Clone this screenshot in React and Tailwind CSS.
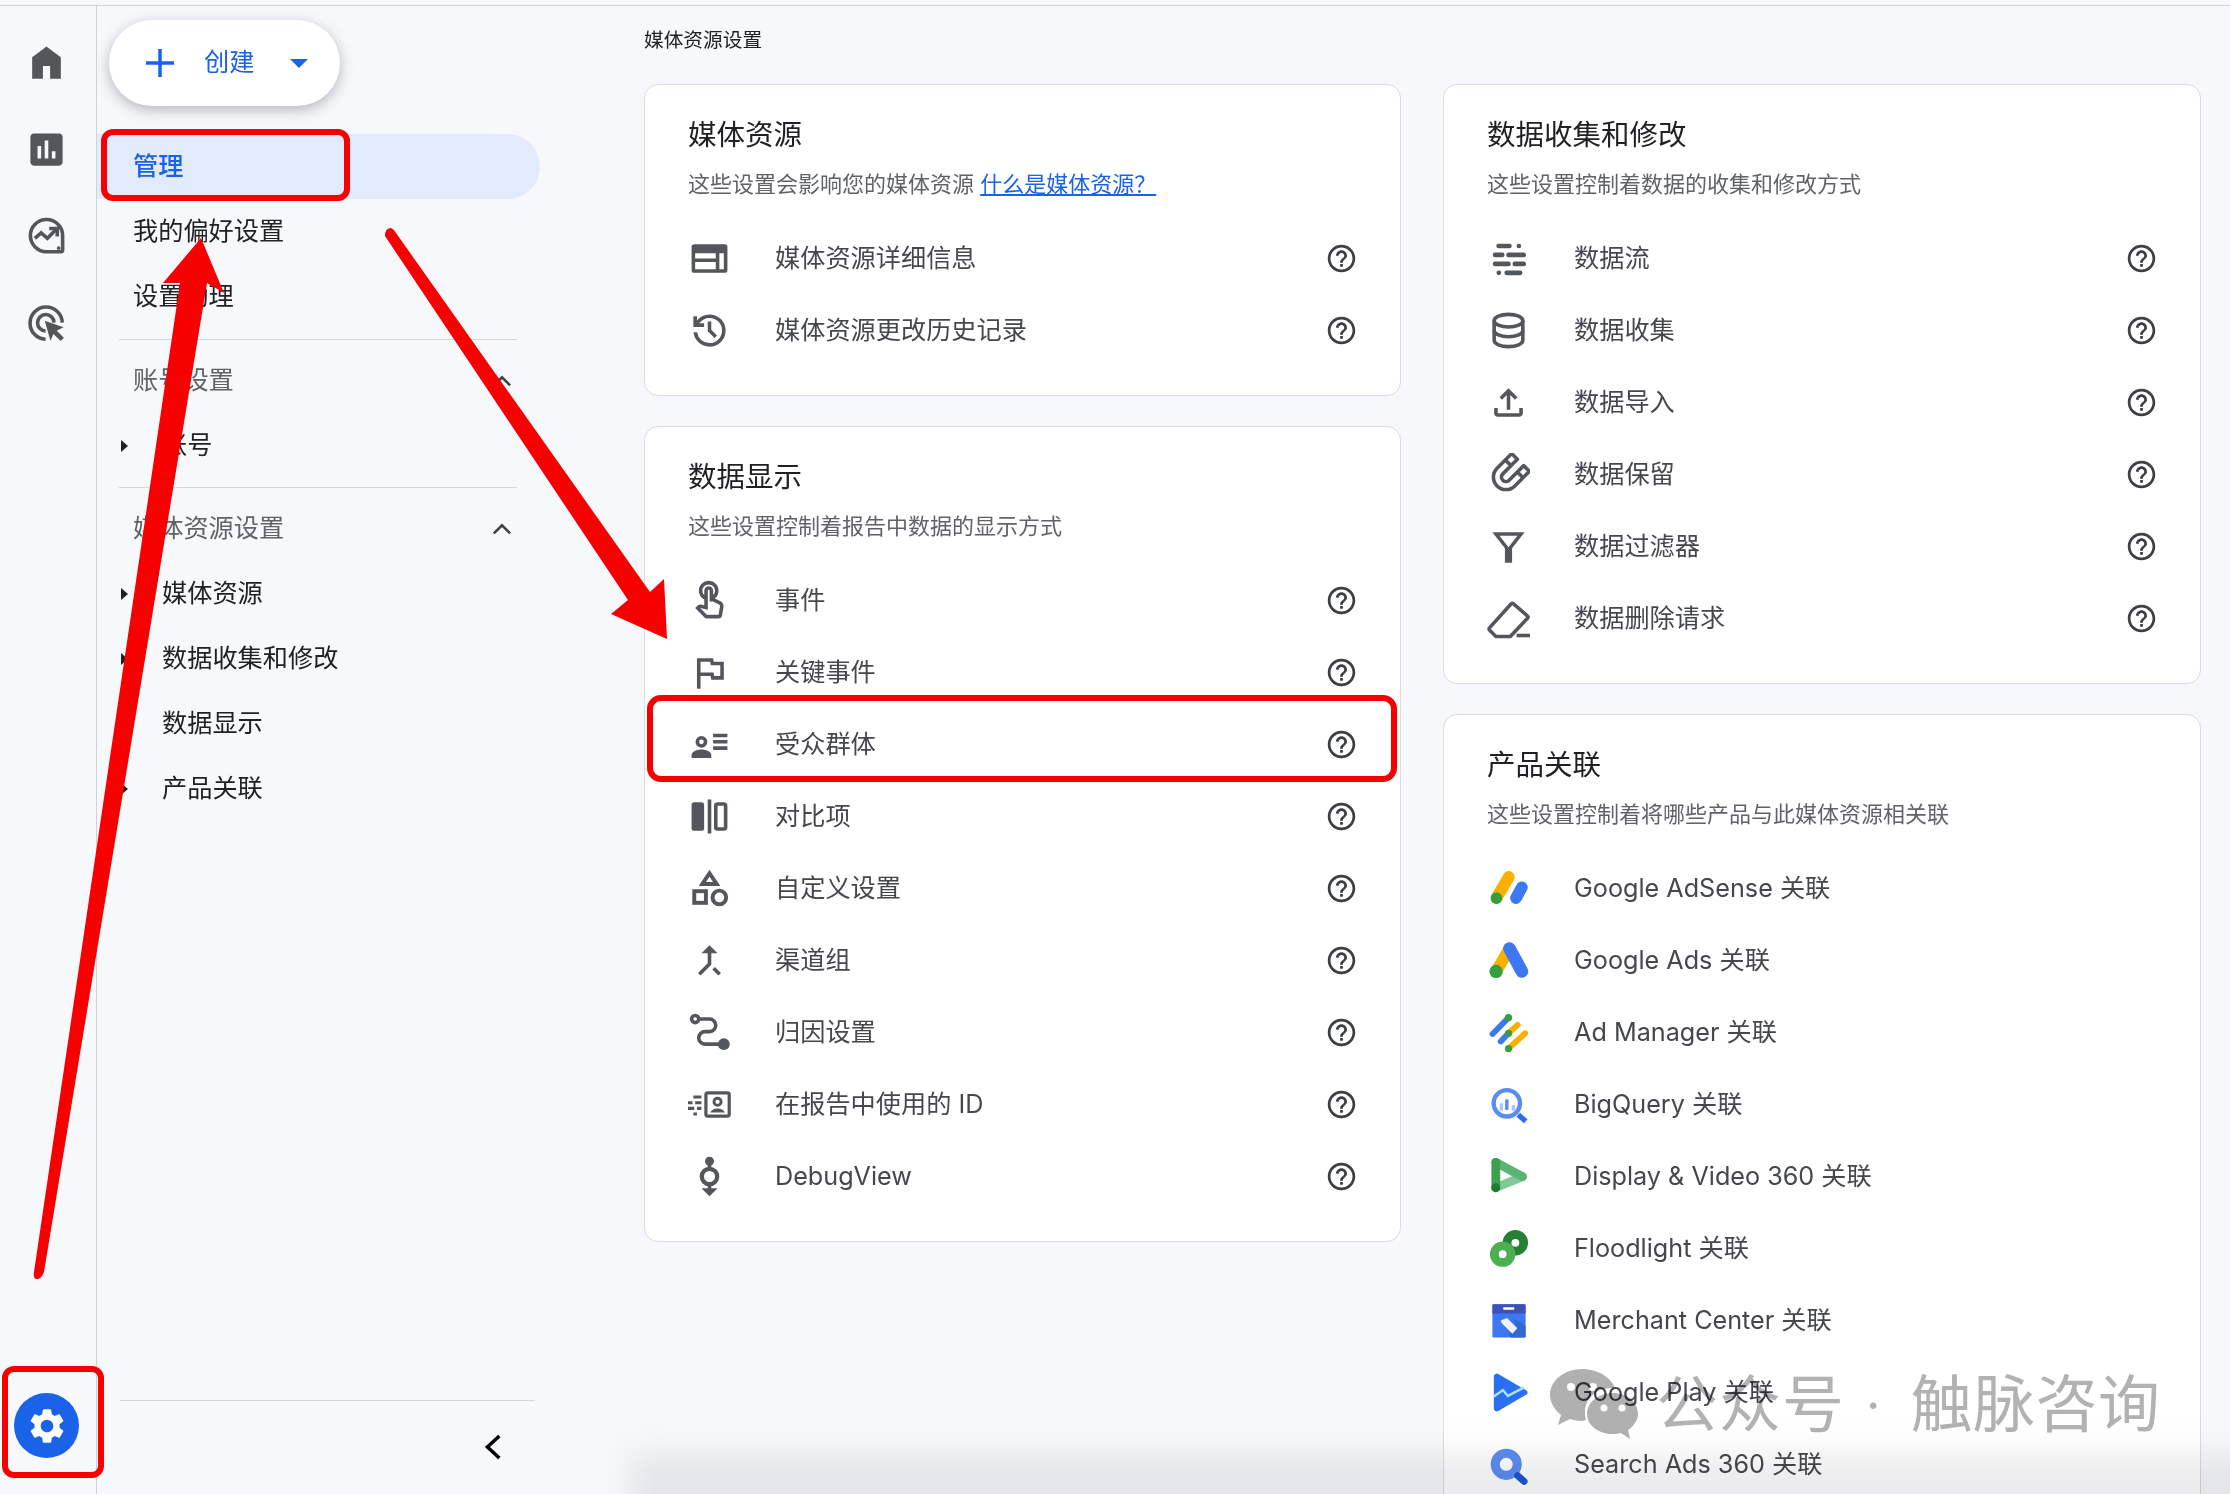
import { MdOutlineTouchApp, MdHelpOutline, MdCallMerge } from "react-icons/md";

const Svg = ({ children, size = 43, vb = "0 0 24 24" }) => (
  <svg width={size} height={size} viewBox={vb} fill="currentColor">
    {children}
  </svg>
);

const HomeIcon = () => <Svg><path d="M4 21V9l8-6 8 6v12h-6v-7h-4v7z" /></Svg>;
const ReportsIcon = () => (
  <Svg><path d="M19 3H5c-1.1 0-2 .9-2 2v14c0 1.1.9 2 2 2h14c1.1 0 2-.9 2-2V5c0-1.1-.9-2-2-2zM9 17H7v-7h2v7zm4 0h-2V7h2v10zm4 0h-2v-4h2v4z" /></Svg>
);
const ExploreIcon = () => (
  <Svg>
    <g fill="none" stroke="currentColor" strokeWidth="2">
      <path d="M20 20.500h-8a9 9 0 1 1 9-9v8a1 1 0 0 1-1 1z" />
      <path d="M5.500 13l3.500-3 3.500 3 5-5" />
      <path d="M13.500 7.500h4.500v4.500" />
    </g>
    <circle cx="18.800" cy="18.500" r="1" />
  </Svg>
);
const AdvertisingIcon = () => (
  <Svg>
    <g fill="none" stroke="currentColor" strokeWidth="2">
      <path d="M20.800 11.500a9 9 0 1 0-9.300 9.300" />
      <path d="M16.200 11.500a4.600 4.600 0 1 0-4.700 4.700" />
    </g>
    <path d="M11 10.500l10.500 3.600-3.800 1.900 4 4-1.800 1.800-4-4-1.700 3.800z" />
  </Svg>
);
const GearIcon = () => (
  <Svg size={42}>
    <path d="M19.140 12.940c.04-.3.06-.61.06-.94 0-.32-.02-.64-.07-.94l2.030-1.580c.18-.14.23-.41.12-.61l-1.920-3.320c-.12-.22-.37-.29-.59-.22l-2.390.96c-.5-.38-1.030-.7-1.620-.94l-.36-2.540c-.04-.24-.24-.41-.48-.41h-3.840c-.24 0-.43.17-.47.41l-.36 2.540c-.59.24-1.130.57-1.620.94l-2.390-.96c-.22-.08-.47 0-.59.22L2.740 8.870c-.12.21-.08.47.12.61l2.030 1.580c-.05.3-.09.63-.09.94s.02.64.07.94l-2.030 1.580c-.18.14-.23.41-.12.61l1.920 3.320c.12.22.37.29.59.22l2.390-.96c.5.38 1.030.7 1.620.94l.36 2.540c.05.24.24.41.48.41h3.840c.24 0 .44-.17.47-.41l.36-2.540c.59-.24 1.130-.56 1.620-.94l2.390.96c.22.08.47 0 .59-.22l1.920-3.320c.12-.22.07-.47-.12-.61l-2.010-1.580zM12 15.600c-1.980 0-3.600-1.620-3.600-3.600s1.620-3.600 3.600-3.600 3.600 1.620 3.600 3.600-1.620 3.600-3.600 3.600z" />
  </Svg>
);

const DetailsIcon = () => (
  <Svg>
    <path fillRule="evenodd" d="M3.500 4h17A1.500 1.500 0 0 1 22 5.500v13a1.500 1.500 0 0 1-1.500 1.500h-17A1.500 1.500 0 0 1 2 18.500v-13A1.500 1.500 0 0 1 3.500 4zM4 9v3h11.500V9zm0 5v4h11.500v-4zm13.500-5v9H20V9z" />
  </Svg>
);
const HistoryIcon = () => (
  <Svg>
    <path d="M12 21q-3.450 0-6.010-2.290Q3.430 16.430 3.050 13H5.100q.35 2.600 2.310 4.300Q9.380 19 12 19q2.920 0 4.960-2.040T19 12q0-2.930-2.040-4.960T12 5q-1.720 0-3.220.8T6.250 8H9v2H3V4h2v2.350q1.280-1.600 3.120-2.470Q9.970 3 12 3q3.750 0 6.380 2.630T21 12q0 3.750-2.620 6.380T12 21zm2.800-4.800L11 12.400V7h2v4.600l3.200 3.200z" />
  </Svg>
);
const TouchIcon = () => <MdOutlineTouchApp size={43} />;
const FlagIcon = () => (
  <Svg><path d="M12.360 6l.4 2H18v6h-3.360l-.4-2H7V6h5.360M14 4H5v17h2v-7h5.600l.4 2h7V6h-5.600L14 4z" /></Svg>
);
const AudienceIcon = () => (
  <Svg>
    <circle cx="7.500" cy="10.500" r="2.300" fill="none" stroke="currentColor" strokeWidth="2" />
    <path d="M2 19.500v-1.500c0-2 3-3.200 5.500-3.200s5.500 1.200 5.500 3.200v1.500z" />
    <path d="M14 6h8v2h-8zM14 9.500h8v2h-8zM14 13h8v2h-8z" />
  </Svg>
);
const CompareIcon = () => (
  <Svg>
    <rect x="2" y="4" width="7" height="16" rx="1.500" />
    <rect x="11" y="2.500" width="2" height="19" />
    <rect x="15.500" y="5" width="5.500" height="14" rx="1" fill="none" stroke="currentColor" strokeWidth="2" />
  </Svg>
);
const ShapesIcon = () => (
  <Svg>
    <g fill="none" stroke="currentColor" strokeWidth="2.200">
      <path d="M12 3.500l4 6H8z" />
      <rect x="3.500" y="13.500" width="6.500" height="6.500" />
      <circle cx="17.500" cy="17" r="3.800" />
    </g>
  </Svg>
);
const MergeIcon = () => <MdCallMerge size={43} />;
const RouteIcon = () => (
  <Svg>
    <g fill="none" stroke="currentColor" strokeWidth="2">
      <circle cx="4" cy="4.500" r="2" />
      <path d="M6 4.500h6a3.500 3.500 0 0 1 0 7H9.500a3.500 3.500 0 0 0 0 7H18" />
    </g>
    <circle cx="20" cy="18.500" r="3.300" />
  </Svg>
);
const IdIcon = () => (
  <Svg>
    <path d="M3 7h4.500v1.700H3zM0 10.200h2.500v1.700H0zM4 10.200h3.500v1.700H4zM0 13.300h3.500v1.700H0zM5 13.300h2.500v1.700H5zM3 16.500h2v1.700H3z" />
    <rect x="10" y="5.500" width="13" height="13" rx="1" fill="none" stroke="currentColor" strokeWidth="1.800" />
    <circle cx="16.500" cy="10.500" r="2" fill="none" stroke="currentColor" strokeWidth="1.600" />
    <path d="M12.500 16.500c.5-1.500 2.500-2.200 4-2.200s3.500.7 4 2.200z" />
  </Svg>
);
const DebugIcon = () => (
  <Svg>
    <circle cx="12" cy="3.500" r="2.500" />
    <path d="M11 3h2v17h-2z" />
    <circle cx="12" cy="12" r="4.300" fill="#fff" stroke="currentColor" strokeWidth="2.400" />
    <path d="M7.500 18.500h9L12 23z" />
  </Svg>
);
const StreamIcon = () => (
  <Svg>
    <g fill="none" stroke="currentColor" strokeWidth="2.600" strokeLinecap="round">
      <path d="M6.500 5h6M17.800 5h.01M4.500 10h4M12 10h8.500M4.500 15h7.500M15.500 15h5M6.600 20h.01M11 20h7.500" />
    </g>
  </Svg>
);
const DatabaseIcon = () => (
  <Svg>
    <g fill="none" stroke="currentColor" strokeWidth="2">
      <ellipse cx="12" cy="6.500" rx="8" ry="3.500" />
      <path d="M4 6.500v11c0 1.900 3.600 3.500 8 3.500s8-1.600 8-3.500v-11" />
      <path d="M4 12c0 1.900 3.600 3.500 8 3.500s8-1.600 8-3.500" />
    </g>
  </Svg>
);
const UploadIcon = () => (
  <Svg>
    <path d="M18 15v3H6v-3H4v3c0 1.100.9 2 2 2h12c1.100 0 2-.9 2-2v-3h-2zM7 9l1.410 1.410L11 7.830V16h2V7.830l2.590 2.580L17 9l-5-5-5 5z" />
  </Svg>
);
const MagnetIcon = () => (
  <Svg>
    <g transform="rotate(45 12 12)" fill="none" stroke="currentColor" strokeWidth="2" strokeLinejoin="round">
      <path d="M5 2.500h4.500V14a2.500 2.500 0 0 0 5 0V2.500H19V14a7 7 0 0 1-14 0z" />
      <path d="M5 7.500h4.500M14.500 7.500H19" />
    </g>
  </Svg>
);
const FunnelIcon = () => (
  <Svg>
    <path fillRule="evenodd" d="M3 4h18l-7 9v8h-4v-8zm4 2l5 6.400L17 6z" />
  </Svg>
);
const EraserIcon = () => (
  <Svg>
    <path d="M14.800 3.800l7.700 6.700a1 1 0 0 1 .1 1.400L13 22H5l-3.500-3.500a1 1 0 0 1 0-1.400L13.400 3.900a1 1 0 0 1 1.400-.1z" fill="none" stroke="currentColor" strokeWidth="2" strokeLinejoin="round" />
    <path d="M16.500 20.500H24v2h-7.500z" />
  </Svg>
);

const Logo = ({ children }) => <svg width="44" height="44" viewBox="0 0 44 44">{children}</svg>;

const AdSenseLogo = () => (
  <Logo>
    <path d="M9.700 32.300L22.300 10.700" stroke="#fbb000" strokeWidth="12" strokeLinecap="round" />
    <circle cx="9.700" cy="32.300" r="6" fill="#389e3c" />
    <path d="M29.700 32.300l6-11" stroke="#3b78f2" strokeWidth="12" strokeLinecap="round" />
  </Logo>
);
const AdsLogo = () => (
  <Logo>
    <path d="M23 10.300L9.300 33.700" stroke="#fbb000" strokeWidth="12" strokeLinecap="round" />
    <path d="M23 10.300l12.700 23.400" stroke="#3b78f2" strokeWidth="13" strokeLinecap="round" />
    <circle cx="9.300" cy="33.700" r="6.800" fill="#389e3c" />
  </Logo>
);
const AdManagerLogo = () => (
  <Logo>
    <g strokeWidth="6" strokeLinecap="round">
      <path d="M5.700 24L22 7.300" stroke="#3b78f2" />
      <path d="M14 31.700l8-8.400" stroke="#3b78f2" />
      <path d="M22 23.300l9.300-8.600" stroke="#fbb000" />
      <path d="M22 39l17-15.700" stroke="#fbb000" />
    </g>
    <circle cx="22" cy="7.300" r="3.700" fill="#389e3c" />
    <circle cx="22" cy="23.300" r="3.700" fill="#389e3c" />
    <circle cx="22" cy="39" r="3.700" fill="#389e3c" />
  </Logo>
);
const BigQueryLogo = () => (
  <Logo>
    <circle cx="20.300" cy="21.300" r="13.500" fill="#fff" stroke="#5b8def" strokeWidth="4.500" />
    <path d="M32 33l7.700 6.700" stroke="#2b6cf0" strokeWidth="5.500" />
    <path d="M14.700 21.300v7.400M27 23v5.700" stroke="#a8c7fa" strokeWidth="3.500" />
    <path d="M20.300 17.300V28" stroke="#5b8def" strokeWidth="3.500" />
  </Logo>
);
const DisplayLogo = () => (
  <Logo>
    <g fill="none" strokeWidth="9" strokeLinecap="round">
      <path d="M9 34L36.300 22.700" stroke="#81c995" />
      <path d="M9 8L36.300 22.700" stroke="#5bb374" />
      <path d="M9 8v26" stroke="#3ba14f" />
    </g>
    <circle cx="9" cy="34" r="4.500" fill="#1e7e34" />
  </Logo>
);
const FloodlightLogo = () => (
  <Logo>
    <circle cx="29" cy="16.700" r="8.500" fill="none" stroke="#268035" strokeWidth="9" />
    <circle cx="16" cy="28.300" r="8.500" fill="none" stroke="#4caf50" strokeWidth="9" />
  </Logo>
);
const MerchantLogo = () => (
  <Logo>
    <rect x="5.500" y="6" width="34" height="34" rx="1.500" fill="#3b78f2" />
    <path d="M22 36l9-6-5-10 13.500 8v10.500a1.500 1.500 0 0 1-1.500 1.500H24z" fill="#3367d6" />
    <path d="M5.500 7.500A1.500 1.500 0 0 1 7 6h31a1.500 1.500 0 0 1 1.500 1.500v7.800h-34z" fill="#3f51b5" />
    <rect x="16.500" y="9" width="11.500" height="2.500" rx="1" fill="#fff" />
    <path d="M14 22.500l6.500-2.500 10.500 10.500-5 5.500L15 25z" fill="#f1f3f4" />
  </Logo>
);
const PlayLogo = () => (
  <Logo>
    <path d="M7 6a3 3 0 0 1 4.500-2.500l29 17a2.500 2.500 0 0 1 0 4l-29 17A3 3 0 0 1 7 39z" fill="#2a6ff0" />
    <path d="M7 26.700l9.300-6.700 5 6L38 17.300" fill="none" stroke="#a8e6ff" strokeWidth="2.500" />
  </Logo>
);
const SearchAdsLogo = () => (
  <Logo>
    <circle cx="19.700" cy="22.300" r="11.300" fill="none" stroke="#5b8def" strokeWidth="9.300" />
    <path d="M31.300 34l6.700 5.700" stroke="#1a56d6" strokeWidth="7" strokeLinecap="round" />
  </Logo>
);

const railIcons = [HomeIcon, ReportsIcon, ExploreIcon, AdvertisingIcon];

const leftTop = [
  ["媒体资源详细信息", DetailsIcon],
  ["媒体资源更改历史记录", HistoryIcon],
];
const displayRows = [
  ["事件", TouchIcon],
  ["关键事件", FlagIcon],
  ["受众群体", AudienceIcon],
  ["对比项", CompareIcon],
  ["自定义设置", ShapesIcon],
  ["渠道组", MergeIcon],
  ["归因设置", RouteIcon],
  ["在报告中使用的 ID", IdIcon],
  ["DebugView", DebugIcon],
];
const collectRows = [
  ["数据流", StreamIcon],
  ["数据收集", DatabaseIcon],
  ["数据导入", UploadIcon],
  ["数据保留", MagnetIcon],
  ["数据过滤器", FunnelIcon],
  ["数据删除请求", EraserIcon],
];
const linkRows = [
  ["Google AdSense 关联", AdSenseLogo],
  ["Google Ads 关联", AdsLogo],
  ["Ad Manager 关联", AdManagerLogo],
  ["BigQuery 关联", BigQueryLogo],
  ["Display & Video 360 关联", DisplayLogo],
  ["Floodlight 关联", FloodlightLogo],
  ["Merchant Center 关联", MerchantLogo],
  ["Google Play 关联", PlayLogo],
  ["Search Ads 360 关联", SearchAdsLogo],
];

const Row = ({ label, Icon, help = true }) => (
  <div className="flex h-[72px] items-center">
    <div className="flex w-[43px] items-center justify-center text-[#53575c]">
      <Icon />
    </div>
    <span className="ml-[44px] flex-1 pt-[1px] text-[25.200px] text-[#44474c]">{label}</span>
    {help && (
      <span className="flex w-[43px] justify-center text-[#3c4043]">
        <MdHelpOutline size={33} />
      </span>
    )}
  </div>
);

const Card = ({ title, desc, rows, help = true }) => (
  <section className="rounded-[14px] border border-[#dadce0] bg-white pt-[32px] pr-[37px] pb-[29px] pl-[43px]">
    <h2 className="h-[36px] text-[28.500px] leading-[36px] font-normal text-[#202124]">{title}</h2>
    <p className="mt-[16px] mb-[23px] h-[30px] text-[22px] leading-[30px] text-[#5f6368]">{desc}</p>
    {rows.map(([label, Icon]) => (
      <Row key={label} label={label} Icon={Icon} help={help} />
    ))}
  </section>
);

const NavChild = ({ label }) => (
  <div className="relative flex h-[65px] items-center pl-[65px] text-[25.200px] text-[#202124]">
    <span className="absolute left-[24px] h-0 w-0 border-y-[6px] border-l-[7px] border-y-transparent border-l-[#202124]" />
    {label}
  </div>
);

const Chevron = () => (
  <svg width="30" height="30" viewBox="0 0 24 24" fill="none" stroke="#3c4043" strokeWidth="2">
    <path d="M5.500 15.500L12 9l6.500 6.500" />
  </svg>
);

const Annotations = () => (
  <svg className="pointer-events-none absolute top-0 left-0" width="2230" height="1494" fill="#f60000">
    <g fill="none" stroke="#f60000" strokeWidth="6">
      <rect x="104" y="132" width="243" height="66" rx="9" />
      <rect x="5" y="1369" width="96" height="106" rx="9" />
      <rect x="650" y="698" width="744" height="81" rx="11" />
    </g>
    <path d="M201 238L224 293 207 283 44 1272Q41 1280 36 1279 33 1278 34 1272L180 283 163 283z" />
    <path d="M385 236Q385 228 391 228 394 229 396 233L650 592 664 579 667 639 611 614 628 600z" />
  </svg>
);

const Watermark = () => (
  <div className="pointer-events-none absolute top-[1368px] left-[1550px] flex items-center text-[#b2b2b2] mix-blend-multiply">
    <svg width="88" height="70" viewBox="0 0 88 70">
      <path d="M32 0C14 0 0 12 0 26c0 8 5 15 11 20l-3 10 12-6c4 1 8 2 12 2l4-1c-1-3-1-6-1-8 0-14 12-24 27-24 1 0 2 0 3 .3C62 9 48 0 32 0z" fill="#b0b0b0" />
      <path d="M63 24C49 24 37 33 37 45s12 20 26 20c3 0 6-.5 8-1l9 6-2-9c6-4 10-10 10-16 0-12-11-21-25-21z" fill="#b0b0b0" />
      <circle cx="21" cy="18" r="4" fill="#fff" />
      <circle cx="43" cy="18" r="4" fill="#fff" />
      <circle cx="54" cy="39" r="3.500" fill="#fff" />
      <circle cx="72" cy="39" r="3.500" fill="#fff" />
    </svg>
    <span className="ml-[18px] pt-[2px] text-[62px] leading-[70px] tracking-[1px] whitespace-nowrap">公众号</span>
    <span className="ml-[21px] pt-[2px] text-[50px] leading-[70px]">·</span>
    <span className="ml-[30px] pt-[2px] text-[62px] leading-[70px] tracking-[0.5px] whitespace-nowrap">触脉咨询</span>
  </div>
);

export default function App() {
  return (
    <div className="relative h-[1494px] w-[2230px] overflow-hidden bg-[#f6f8fb] pt-[5px] font-['Inter','Noto_Sans_CJK_SC',sans-serif]">
      <div className="flex h-full border-t border-[#d5d7da]">
        {/* rail */}
        <aside className="flex w-[97px] shrink-0 flex-col items-center border-r border-[#d0d2d6] pt-[35px] pr-[3px] text-[#53575c]">
          <div className="flex flex-col gap-[44px]">
            {railIcons.map((Icon, i) => (
              <Icon key={i} />
            ))}
          </div>
          <div className="mt-auto mb-[36px] flex h-[65px] w-[65px] items-center justify-center rounded-full bg-[#1a62e8] text-white">
            <GearIcon />
          </div>
        </aside>

        {/* nav */}
        <nav className="flex w-[464px] shrink-0 flex-col">
          <button className="mt-[14px] ml-[12px] flex h-[86px] w-[231px] items-center rounded-full bg-white pl-[35px] text-[25.200px] text-[#1a62e8] shadow-[0_4px_14px_rgba(60,64,67,0.35)]">
            <svg width="32" height="32" viewBox="0 0 32 32" fill="none" stroke="#1a62e8" strokeWidth="3.500">
              <path d="M16 2v28M2 16h28" />
            </svg>
            <span className="ml-[28px]">创建</span>
            <span className="ml-[36px] h-0 w-0 border-x-[9px] border-t-[9px] border-x-transparent border-t-[#1a62e8]" />
          </button>
          <div className="mt-[28px] flex h-[65px] w-[443px] items-center rounded-r-full bg-[#e1ebfc] pl-[36px] text-[25.200px] font-medium text-[#1a62e8]">管理</div>
          <div className="flex h-[65px] items-center pl-[36px] text-[25.200px] text-[#202124]">我的偏好设置</div>
          <div className="flex h-[65px] items-center pl-[36px] text-[25.200px] text-[#202124]">设置助理</div>
          <div className="mt-[10px] ml-[22px] w-[398px] border-t border-[#d5d7da]" />
          <div className="mt-[8px] flex h-[65px] items-center justify-between pr-[44px] pl-[36px] text-[25.200px] text-[#5f6368]">
            账号设置
            <Chevron />
          </div>
          <NavChild label="账号" />
          <div className="mt-[9px] ml-[22px] w-[398px] border-t border-[#d5d7da]" />
          <div className="mt-[8px] flex h-[65px] items-center justify-between pr-[44px] pl-[36px] text-[25.200px] text-[#5f6368]">
            媒体资源设置
            <Chevron />
          </div>
          <NavChild label="媒体资源" />
          <NavChild label="数据收集和修改" />
          <NavChild label="数据显示" />
          <NavChild label="产品关联" />
          <div className="mt-auto ml-[23px] w-[415px] border-t border-[#d5d7da]" />
          <div className="flex h-[93px] justify-end pt-[27px] pr-[49px]">
            <svg width="38" height="38" viewBox="0 0 24 24" fill="none" stroke="#000" strokeWidth="2.200">
              <path d="M16 5l-7.500 7 7.500 7" />
            </svg>
          </div>
        </nav>

        {/* main */}
        <main className="min-w-0 flex-1 pl-[83px]">
          <h1 className="flex h-[68px] items-center pt-[1px] text-[19.700px] font-normal text-[#202124]">媒体资源设置</h1>
          <div className="mt-[10px] flex gap-[42px]">
            <div className="flex w-[757px] flex-col gap-[30px]">
              <Card
                title="媒体资源"
                desc={
                  <>
                    这些设置会影响您的媒体资源{" "}
                    <a className="text-[#1a62e8] underline">什么是媒体资源？</a>
                  </>
                }
                rows={leftTop}
              />
              <Card title="数据显示" desc="这些设置控制着报告中数据的显示方式" rows={displayRows} />
            </div>
            <div className="flex w-[758px] flex-col gap-[30px]">
              <Card title="数据收集和修改" desc="这些设置控制着数据的收集和修改方式" rows={collectRows} />
              <Card title="产品关联" desc="这些设置控制着将哪些产品与此媒体资源相关联" rows={linkRows} help={false} />
            </div>
          </div>
        </main>
      </div>

      <Annotations />
      <Watermark />
      <div className="pointer-events-none absolute right-[-60px] bottom-[-30px] left-[630px] h-[70px] bg-[#ececee] mix-blend-multiply blur-[16px]" />
    </div>
  );
}
